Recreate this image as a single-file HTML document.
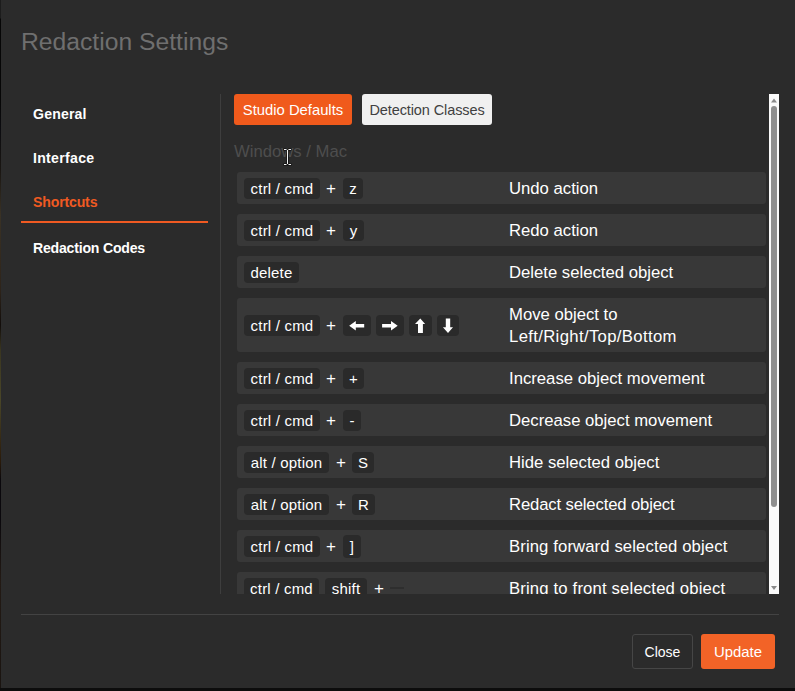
<!DOCTYPE html>
<html><head><meta charset="utf-8">
<style>
*{box-sizing:border-box;margin:0;padding:0}
html,body{width:795px;height:691px;overflow:hidden;background:#0d0d0d;font-family:"Liberation Sans",sans-serif}
#dlg{position:absolute;left:1px;top:0;width:800px;height:688px;background:#2b2b2b}
.a{position:absolute;white-space:nowrap}
.title{left:20px;top:25px;font-size:24.7px;line-height:34px;color:#6f6f6f}
.nav{left:32px;font-size:14.1px;font-weight:bold;color:#fff;line-height:20px}
.vline{left:219px;top:94px;width:1px;height:500px;background:#3e3e3e}
.btn{position:absolute;top:94px;height:31px;border-radius:3px;font-size:14.5px;line-height:31px;text-align:center}
.scroll{position:absolute;left:220px;top:94px;width:560px;height:500px;overflow:hidden}
.row{position:absolute;left:16px;width:529px;height:32px;background:#383838;border-radius:3px}
.k{position:absolute;top:6px;height:21px;background:#2a2a2a;border-radius:4px;color:#fff;font-size:15px;line-height:22px;text-align:center;letter-spacing:0.2px}
.p{position:absolute;top:6px;color:#fff;font-size:17px;line-height:21px}
.d{position:absolute;left:272px;top:1px;color:#fff;font-size:16.7px;line-height:32px}
</style></head><body>
<div style="position:absolute;left:0;top:0;width:1px;height:688px;background:linear-gradient(to bottom,#1c1c1c 0px,#1c1c1c 18px,#060606 19px,#060606 100px,#0c0c10 130px,#1a1612 170px,#3a3225 215px,#2e241a 290px,#120d0a 325px,#3a3620 350px,#4a4628 400px,#2a1a0a 462px,#0a080c 480px,#0a080c 520px,#231a14 580px,#1a1410 688px)"></div>
<div id="dlg">
  <div class="a title">Redaction Settings</div>
  <div class="a nav" style="top:104px;letter-spacing:0.17px">General</div>
  <div class="a nav" style="top:148px;letter-spacing:0.3px">Interface</div>
  <div class="a nav" style="top:192px;color:#f05a22;letter-spacing:-0.16px">Shortcuts</div>
  <div class="a" style="left:20px;top:221px;width:187px;height:2px;background:#f05a22"></div>
  <div class="a nav" style="top:238px;letter-spacing:-0.21px">Redaction Codes</div>
  <div class="a vline"></div>

  <div class="scroll">
    <div class="btn" style="left:13px;top:0;width:118px;background:#f05a1c;color:#fff;line-height:33px;font-size:14.8px">Studio Defaults</div>
    <div class="btn" style="left:141px;top:0;width:130px;background:#f0f0f0;color:#404040;line-height:33px;letter-spacing:-0.1px">Detection Classes</div>
    <div class="a" style="left:13px;top:48px;font-size:16.7px;line-height:20px;color:#4e4e4e">Windows / Mac</div>

    <div class="row" style="top:78px">
      <div class="k" style="left:7px;width:76px">ctrl / cmd</div><div class="p" style="left:89px">+</div><div class="k" style="left:106px;width:20px">z</div>
      <div class="d">Undo action</div>
    </div>
    <div class="row" style="top:120px">
      <div class="k" style="left:7px;width:76px">ctrl / cmd</div><div class="p" style="left:89px">+</div><div class="k" style="left:106px;width:21px">y</div>
      <div class="d">Redo action</div>
    </div>
    <div class="row" style="top:162px">
      <div class="k" style="left:7px;width:55px">delete</div>
      <div class="d">Delete selected object</div>
    </div>
    <div class="row" style="top:204px;height:54px">
      <div class="k" style="top:17px;left:7px;width:76px">ctrl / cmd</div><div class="p" style="top:17px;left:89px">+</div>
      <div class="k" style="top:17px;left:106px;width:28px"></div>
      <div class="k" style="top:17px;left:139px;width:28px"></div>
      <div class="k" style="top:17px;left:172px;width:23px"></div>
      <div class="k" style="top:17px;left:200px;width:22px"></div>
      <svg class="a" style="left:0;top:0" width="529" height="54" viewBox="237 298 529 54">
        <path fill="#fff" d="M349.2 325.8 L355.8 321 L355.8 324.1 L364.2 324.1 L364.2 327.6 L355.8 327.6 L355.8 330.6 Z"/>
        <path fill="#fff" d="M397.7 325.8 L391 321 L391 324.1 L382.1 324.1 L382.1 327.6 L391 327.6 L391 330.6 Z"/>
        <path fill="#fff" d="M420.3 318.4 L425.1 324.1 L422.9 324.1 L422.9 333 L418 333 L418 324.1 L415 324.1 Z"/>
        <path fill="#fff" d="M448 333 L453 327.2 L450.2 327.2 L450.2 318.4 L445.8 318.4 L445.8 327.2 L442.9 327.2 Z"/>
      </svg>
      <div class="d" style="top:6px;line-height:22px">Move object to<br><span style="letter-spacing:0.35px">Left/Right/Top/Bottom</span></div>
    </div>
    <div class="row" style="top:268px">
      <div class="k" style="left:7px;width:76px">ctrl / cmd</div><div class="p" style="left:89px">+</div><div class="k" style="left:106px;width:21px">+</div>
      <div class="d">Increase object movement</div>
    </div>
    <div class="row" style="top:310px">
      <div class="k" style="left:7px;width:76px">ctrl / cmd</div><div class="p" style="left:89px">+</div><div class="k" style="left:106px;width:18px">-</div>
      <div class="d">Decrease object movement</div>
    </div>
    <div class="row" style="top:352px">
      <div class="k" style="left:7px;width:85px">alt / option</div><div class="p" style="left:99px">+</div><div class="k" style="left:115px;width:22px">S</div>
      <div class="d">Hide selected object</div>
    </div>
    <div class="row" style="top:394px">
      <div class="k" style="left:7px;width:85px">alt / option</div><div class="p" style="left:99px">+</div><div class="k" style="left:115px;width:23px">R</div>
      <div class="d" style="letter-spacing:-0.15px">Redact selected object</div>
    </div>
    <div class="row" style="top:436px">
      <div class="k" style="left:7px;width:76px">ctrl / cmd</div><div class="p" style="left:89px">+</div><div class="k" style="left:106px;top:5px;height:23px;line-height:24px;width:18px">]</div>
      <div class="d" style="letter-spacing:0.11px">Bring forward selected object</div>
    </div>
    <div class="row" style="top:478px">
      <div class="k" style="left:7px;width:75px">ctrl / cmd</div><div class="k" style="left:88px;width:42px">shift</div><div class="p" style="left:137px">+</div>
      <div class="a" style="left:153px;top:15px;width:14px;height:2px;background:#2e2e2e"></div>
      <div class="d" style="letter-spacing:0.16px">Bring to front selected object</div>
    </div>

    <div class="a" style="left:548px;top:0;width:10px;height:500px;background:#fafafa"></div>
    <div class="a" style="left:550px;top:12px;width:6px;height:401px;background:#8e8e8e;border-radius:3px"></div>
    <svg class="a" style="left:548px;top:0" width="10" height="500" viewBox="0 0 10 500"><path fill="#8a8a8a" d="M2 8.5 L5 4.5 L8 8.5 Z"/><path fill="#8a8a8a" d="M2 492 L5 496 L8 492 Z"/></svg>
  </div>

  <svg class="a" style="left:279px;top:146px" width="16" height="22" viewBox="280 146 16 22"><path d="M283.5 149.5 H291.5 M283.5 164.5 H291.5 M287.5 149.5 V164.5" stroke="#000" stroke-width="2.6" fill="none" opacity="0.55"/><path d="M284 149.5 H286.5 M288.5 149.5 H291 M284 164.5 H286.5 M288.5 164.5 H291 M287.5 150 V164" stroke="#f2f2f2" stroke-width="1" fill="none"/></svg>
  <div class="a" style="left:20px;top:614px;width:758px;height:1px;background:#434343"></div>
  <div class="btn" style="left:631px;top:634px;width:61px;height:35px;border:1px solid #464646;color:#fff;line-height:35px;font-size:14px">Close</div>
  <div class="btn" style="left:700px;top:634px;width:74px;height:35px;background:#f26327;color:#fff;line-height:37px;font-size:14.9px">Update</div>
</div>
</body></html>
